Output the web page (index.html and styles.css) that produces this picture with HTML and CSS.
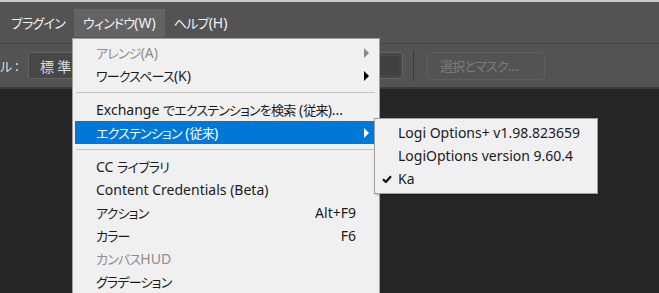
FILE: index.html
```html
<!DOCTYPE html>
<html lang="ja">
  <head>
    <meta charset="UTF-8" />
    <title>ウィンドウ メニュー</title>
    <link rel="stylesheet" href="styles.css">
  </head>
  <body>
    <div class="app">
      <div class="menubar">
        <span class="menubar-item"><span class="ja">プラグイン</span></span>
        <span class="menubar-item active"><span class="ja">ウィンドウ</span>(W)</span>
        <span class="menubar-item"><span class="ja">ヘルプ</span>(H)</span>
      </div>

      <div class="optionsbar">
        <span class="opt-label"><span class="ja">ル</span> :</span>
        <div class="select-box">
          <span class="select-text">標 準</span>
          <span class="select-inner"></span>
        </div>
        <span class="opt-divider"></span>
        <button class="opt-button" disabled><span class="ja">選択とマスク</span>...</button>
      </div>

      <div class="workspace"></div>
    </div>

    <!-- ウィンドウ menu -->
    <div class="menu dropdown">
      <div class="menu-row disabled">
        <span class="label"><span class="ja">アレンジ</span>(A)</span>
        <span class="arrow"></span>
      </div>
      <div class="menu-row">
        <span class="label"><span class="ja">ワークスペース</span>(K)</span>
        <span class="arrow"></span>
      </div>
      <div class="menu-sep"></div>
      <div class="menu-row">
        <span class="label">Exchange <span class="ja">でエクステンションを検索</span> (<span class="ja">従来</span>)...</span>
      </div>
      <div class="menu-row selected">
        <span class="label"><span class="ja">エクステンション</span> (<span class="ja">従来</span>)</span>
        <span class="arrow"></span>
      </div>
      <div class="menu-sep"></div>
      <div class="menu-row">
        <span class="label">CC <span class="ja">ライブラリ</span></span>
      </div>
      <div class="menu-row">
        <span class="label">Content Credentials (Beta)</span>
      </div>
      <div class="menu-row">
        <span class="label"><span class="ja">アクション</span></span>
        <span class="shortcut">Alt+F9</span>
      </div>
      <div class="menu-row">
        <span class="label"><span class="ja">カラー</span></span>
        <span class="shortcut">F6</span>
      </div>
      <div class="menu-row disabled">
        <span class="label"><span class="ja">カンバス</span>HUD</span>
      </div>
      <div class="menu-row">
        <span class="label"><span class="ja">グラデーション</span></span>
      </div>
    </div>

    <!-- エクステンション submenu -->
    <div class="menu submenu">
      <div class="menu-row">
        <span class="check"></span>
        <span class="label">Logi Options+ v1.98.823659</span>
      </div>
      <div class="menu-row">
        <span class="check"></span>
        <span class="label">LogiOptions version 9.60.4</span>
      </div>
      <div class="menu-row">
        <span class="check">
          <svg width="10" height="8" viewBox="0 0 10 8">
            <path d="M1 4.2 L3.8 7 L9 1.2" fill="none" stroke="#111" stroke-width="2.2" />
          </svg>
        </span>
        <span class="label">Ka</span>
      </div>
    </div>
  </body>
</html>
```

FILE: styles.css
```css
* {
  margin: 0;
  padding: 0;
  box-sizing: border-box;
}
body {
  font-family: "Noto Sans", "Noto Sans CJK JP", sans-serif;
  font-size: 14px;
  background: #282828;
  width: 659px;
  height: 293px;
  overflow: hidden;
  position: relative;
}
/* japanese runs: narrower, like the UI font on screen */
.ja {
  font-family: "Noto Sans CJK JP", sans-serif;
  font-feature-settings: "palt";
  font-size: 13px;
  letter-spacing: -0.8px;
}

.app {
  display: flex;
  flex-direction: column;
  height: 100%;
}

.menubar {
  border-top: 2px solid #cdcdcd;
  background: #535353;
  height: 44px;
  display: flex;
  align-items: flex-start;
  padding: 7px 0 0 2px;
  border-bottom: 1px solid #464646;
}
.menubar-item {
  height: 28px;
  line-height: 28px;
  padding: 0 9px;
  color: #f2f2f2;
}
.menubar-item.active {
  background: #636363;
}

.optionsbar {
  background: #535353;
  height: 45px;
  display: flex;
  align-items: center;
  border-bottom: 2px solid #3b3b3b;
}
.opt-label {
  color: #dcdcdc;
  width: 28px;
  white-space: nowrap;
}
.select-box {
  width: 375px;
  height: 27px;
  border: 1px solid #636363;
  border-radius: 3px;
  background: #474747;
  display: flex;
  align-items: center;
  padding-left: 11px;
  padding-right: 3px;
  color: #dcdcdc;
  font-family: "Noto Sans CJK JP", sans-serif;
}
.select-text {
  flex: 1;
}
.select-inner {
  width: 20px;
  height: 19px;
  background: #404040;
}
.opt-divider {
  width: 1px;
  height: 31px;
  background: #3a3a3a;
  margin: 0 13px 0 10px;
}
.opt-button {
  font: inherit;
  width: 118px;
  height: 28px;
  border: 1px solid #5f5f5f;
  border-radius: 4px;
  background: #535353;
  color: #7b7b7b;
  text-align: left;
  padding-left: 12px;
}

.workspace {
  flex: 1;
  background: #262626;
}

/* popup menus */
.menu {
  position: absolute;
  background: #f0f0f0;
  border: 1px solid #a0a0a0;
  color: #1b1b1b;
}
.dropdown {
  left: 72px;
  top: 38px;
  width: 308px;
  padding: 2px 2px 0 2px;
}
.submenu {
  left: 374px;
  top: 118px;
  width: 224px;
  padding: 2px 2px 3px 2px;
  box-shadow: 1px 1px 2px rgba(0, 0, 0, 0.25);
}
.menu-row {
  height: 23px;
  display: flex;
  align-items: center;
  padding: 0 8px 0 21px;
  white-space: nowrap;
}
.menu-row .label {
  flex: 1;
}
.menu-row.disabled {
  color: #8d8d8d;
}
.menu-row.selected {
  background: #0078d7;
  color: #fff;
}
.shortcut {
  margin-right: 13px;
}
.arrow {
  width: 0;
  height: 0;
  border-top: 5px solid transparent;
  border-bottom: 5px solid transparent;
  border-left: 5px solid #000;
}
.disabled .arrow {
  border-left-color: #8a8a8a;
}
.selected .arrow {
  border-left-color: #fff;
}
.menu-sep {
  height: 1px;
  background: #c2c2c2;
  margin: 5px 2px 5px 1px;
}

.submenu .menu-row {
  padding-left: 5px;
}
.check {
  width: 16px;
  display: flex;
  align-items: center;
}
```
